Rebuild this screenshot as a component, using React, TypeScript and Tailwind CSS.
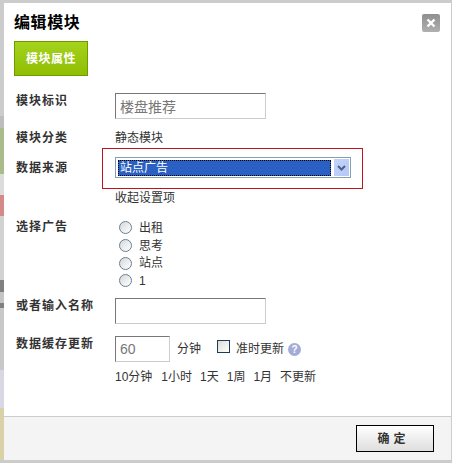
const labelCls = "w-[101px] shrink-0 pl-[2px] font-bold tracking-[1px] text-[#333]";
const inputCls = "h-[26px] border border-t-[#777] border-r-[#ccc] border-b-[#ccc] border-l-[#777] outline-none";

function Radio({ label }: { label: string }) {
  return (
    <label className="flex h-[17.7px] items-center gap-[7px] pl-[4px]">
      <span className="h-[13px] w-[13px] rounded-full border border-[#6b7f8f] bg-gradient-to-br from-[#d5d9dc] to-white" />
      <span>{label}</span>
    </label>
  );
}

export default function App() {
  return (
    <div
      className="flex h-[463px] w-[452px] overflow-hidden bg-[#cccccc] pt-[3px] pb-[3px] text-[12px] leading-[16px] text-[#333]"
      style={{ fontFamily: '"Liberation Sans", "Noto Sans CJK SC", sans-serif' }}
    >
      {/* strip of the page behind the dialog */}
      <div className="flex w-[4px] shrink-0 flex-col">
        <div className="h-[113px] bg-[#cccccc]" />
        <div className="h-[12px] bg-[#bdbdbd]" />
        <div className="h-[46px] bg-[#a9bd8a]" />
        <div className="h-[21px] bg-[#dcdcdc]" />
        <div className="h-[21px] bg-[#d58a8a]" />
        <div className="h-[64px] bg-[#d2d2d2]" />
        <div className="h-[12px] bg-[#808080]" />
        <div className="h-[11px] bg-[#c4c4c4]" />
        <div className="h-[5px] bg-[#808080]" />
        <div className="h-[62px] bg-[#c8c8c8]" />
        <div className="h-[38px] bg-[#d8d8e4]" />
        <div className="flex-1 bg-[#d9d2a8]" />
      </div>

      {/* dialog */}
      <div className="flex w-[447px] shrink-0 flex-col bg-white">
        <div className="flex flex-1 flex-col px-[10px]">
          <div className="flex items-start justify-between pt-[9px]">
            <h1 className="text-[16px] leading-[22px] font-bold tracking-[0.6px] text-black">编辑模块</h1>
            <button className="mt-[2px] mr-[1px] flex h-[18px] w-[18px] items-center justify-center rounded-[2px] bg-gradient-to-b from-[#8f8f8f] to-[#b0b0b0]">
              <svg width="10" height="10" viewBox="0 0 10 10">
                <path d="M1.5 1.5 8.5 8.5M8.5 1.5 1.5 8.5" stroke="#fff" strokeWidth="2.4" />
              </svg>
            </button>
          </div>

          <div className="mt-[7px]">
            <button className="h-[35px] w-[74px] border border-[#6f9a00] bg-gradient-to-b from-[#a5d31c] to-[#8fbe02] font-bold tracking-[0.5px] text-white">
              模块属性
            </button>
          </div>

          <div className="mt-[17px] flex h-[26px] items-start">
            <span className={labelCls}>模块标识</span>
            <input
              readOnly
              value="楼盘推荐"
              className={`${inputCls} w-[151px] px-[4px] text-[14px] text-[#777]`}
            />
          </div>

          <div className="mt-[11px] flex h-[16px] items-center">
            <span className={labelCls}>模块分类</span>
            <span>静态模块</span>
          </div>

          <div className="mt-[2px] flex items-center">
            <span className={`${labelCls} -mt-[1px]`}>数据来源</span>
            <div className="-ml-[13px] flex h-[41px] w-[261px] items-center border border-[#c0141c] pb-[2px] pl-[12px]">
              <div className="flex h-[21px] w-[236px] items-center border border-[#87a0ae] bg-white pr-[1px] pl-[2px]">
                <div className="h-[16px] flex-1 border border-dotted border-black bg-[#2a5fc4] pl-[1px] text-[12px] leading-[14px] text-white">
                  站点广告
                </div>
                <div className="ml-[3px] flex h-[17px] w-[15px] items-center justify-center bg-gradient-to-br from-[#c3d3fb] to-[#b4c8f6]">
                  <svg width="9" height="6" viewBox="0 0 9 6">
                    <path d="M1 1l3.5 3.5L8 1" fill="none" stroke="#4d6185" strokeWidth="2" />
                  </svg>
                </div>
              </div>
            </div>
          </div>

          <div className="mt-[1px] pl-[101px]">收起设置项</div>

          <div className="mt-[13px] flex items-start">
            <span className={labelCls}>选择广告</span>
            <div className="flex flex-col">
              <Radio label="出租" />
              <Radio label="思考" />
              <Radio label="站点" />
              <Radio label="1" />
            </div>
          </div>

          <div className="mt-[8px] flex items-start">
            <span className={labelCls}>或者输入名称</span>
            <input readOnly className={`${inputCls} w-[151px]`} />
          </div>

          <div className="mt-[12px] flex items-start">
            <span className={labelCls}>数据缓存更新</span>
            <input
              readOnly
              value="60"
              className={`${inputCls} w-[55px] px-[4px] text-[14px] text-[#777]`}
            />
            <span className="mt-[5px] ml-[7px]">分钟</span>
            <span className="mt-[4px] ml-[16px] h-[13px] w-[13px] border border-[#1f3a55] bg-gradient-to-br from-[#dcdcd6] to-white" />
            <span className="mt-[5px] ml-[6px]">准时更新</span>
            <span className="mt-[7px] ml-[4px] flex h-[13px] w-[13px] items-center justify-center rounded-full bg-[#a3acd6] text-[10px] leading-[13px] font-bold text-white">
              ?
            </span>
          </div>

          <div className="mt-[7px] flex pl-[101px]">
            <span>10分钟</span>
            <span className="ml-[9px]">1小时</span>
            <span className="ml-[8px]">1天</span>
            <span className="ml-[8px]">1周</span>
            <span className="ml-[8px]">1月</span>
            <span className="ml-[8px]">不更新</span>
          </div>
        </div>

        <div className="flex h-[44px] items-center justify-end border-t border-[#cccccc] bg-[#f4f4f4] pr-[17px]">
          <button className="h-[27px] w-[78px] border border-black bg-gradient-to-b from-white to-[#dedede] pr-[3px] text-[12px] font-bold tracking-[4px] text-[#333]">
            确定
          </button>
        </div>
      </div>
    </div>
  );
}
